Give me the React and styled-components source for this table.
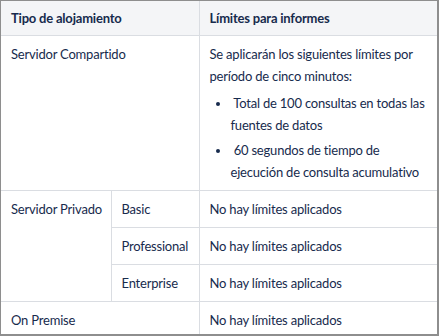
import React from 'react';
import styled, { createGlobalStyle } from 'styled-components';

const TEXT = '#172b4d';
const LINE = '#dadde2';

const GlobalStyle = createGlobalStyle`
  html, body {
    margin: 0;
    padding: 0;
    background: #ffffff;
  }
  body {
    font-family: Lato, "Liberation Sans", sans-serif;
    color: ${TEXT};
  }
`;

const Frame = styled.div`
  width: 439px;
  height: 336px;
  box-sizing: border-box;
  border: 1px solid #8e8e8e;
  border-right-width: 2px;
  border-bottom-width: 2px;
  overflow: hidden;
  background: #ffffff;
`;

const Table = styled.table`
  width: 100%;
  border-collapse: collapse;
  table-layout: fixed;
  font-size: 13px;
  letter-spacing: -0.2px;
  line-height: 22px;
`;

const HeadCell = styled.th`
  background: #f4f5f7;
  text-align: left;
  font-weight: 700;
  padding: 6px 10px;
  border: 1px solid ${LINE};
  border-top: none;
  vertical-align: top;

  &:first-child {
    border-left: none;
  }
  &:last-child {
    border-right: none;
  }
`;

const Cell = styled.td`
  padding: 7px 10px;
  border: 1px solid ${LINE};
  vertical-align: top;
  border-left: ${({ $edge }) => ($edge ? 'none' : `1px solid ${LINE}`)};
  border-right: ${({ $last }) => ($last ? 'none' : `1px solid ${LINE}`)};
  white-space: ${({ $nowrap }) => ($nowrap ? 'nowrap' : 'normal')};
`;

const Para = styled.p`
  margin: 0 0 5px;
`;

const List = styled.ul`
  margin: 0;
  padding-left: 21px;
`;

const Item = styled.li`
  margin-top: 3px;
  &:first-child {
    margin-top: 0;
  }
`;

const NONE = 'No hay límites aplicados';

export default function App() {
  return (
    <>
      <GlobalStyle />
      <Frame>
        <Table>
          <colgroup>
            <col style={{ width: 110 }} />
            <col style={{ width: 88 }} />
            <col />
          </colgroup>
          <thead>
            <tr>
              <HeadCell colSpan={2}>Tipo de alojamiento</HeadCell>
              <HeadCell>Límites para informes</HeadCell>
            </tr>
          </thead>
          <tbody>
            <tr>
              <Cell colSpan={2} $edge>Servidor Compartido</Cell>
              <Cell $last>
                <Para>Se aplicarán los siguientes límites por período de cinco minutos:</Para>
                <List>
                  <Item>&nbsp;Total de 100 consultas en todas las fuentes de datos</Item>
                  <Item>&nbsp;60 segundos de tiempo de ejecución de consulta acumulativo</Item>
                </List>
              </Cell>
            </tr>
            <tr>
              <Cell rowSpan={3} $edge $nowrap>Servidor Privado</Cell>
              <Cell $nowrap>Basic</Cell>
              <Cell $last>{NONE}</Cell>
            </tr>
            <tr>
              <Cell $nowrap>Professional</Cell>
              <Cell $last>{NONE}</Cell>
            </tr>
            <tr>
              <Cell $nowrap>Enterprise</Cell>
              <Cell $last>{NONE}</Cell>
            </tr>
            <tr>
              <Cell colSpan={2} $edge>On Premise</Cell>
              <Cell $last>{NONE}</Cell>
            </tr>
          </tbody>
        </Table>
      </Frame>
    </>
  );
}
